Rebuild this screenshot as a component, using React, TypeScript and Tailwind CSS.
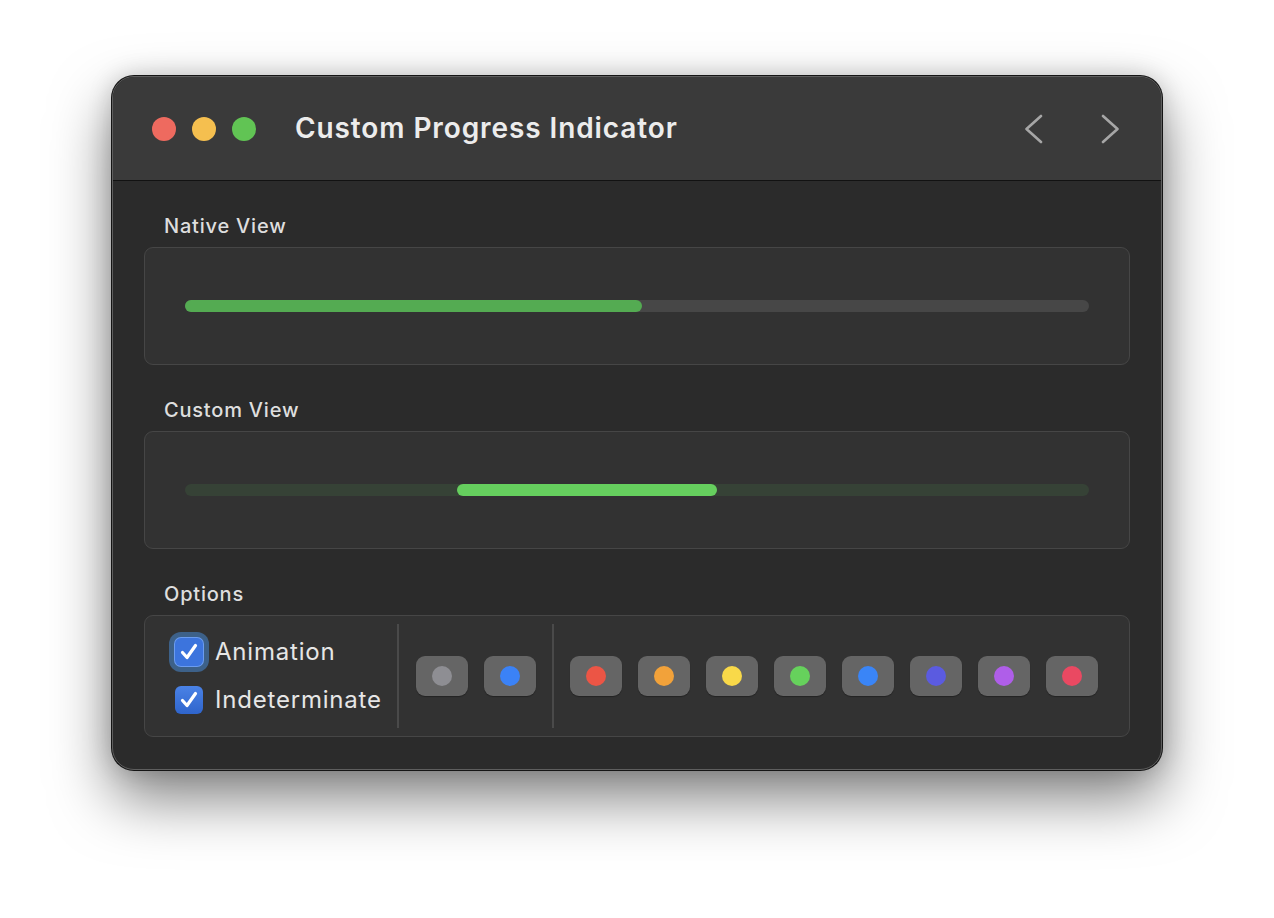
const font = { fontFamily: "Inter, 'Noto Sans', sans-serif" }

const accentDots = ["#8e8e93", "#3b82f6"]
const tintDots = ["#ec5545", "#f2a23a", "#f9d949", "#66d15c", "#3a85f7", "#5b5be0", "#af5ee9", "#ea4962"]

function Check({ focused }: { focused?: boolean }) {
	return (
		<div
			className={
				focused
					? "flex h-[28px] w-[28px] items-center justify-center rounded-[6px] bg-[#3c74dd] shadow-[0_0_0_1px_#6b9cf0,0_0_0_6px_#3d6189]"
					: "flex h-[28px] w-[28px] items-center justify-center rounded-[6px] bg-gradient-to-b from-[#4a82e6] to-[#2f65cc]"
			}
		>
			<svg width="20" height="20" viewBox="0 0 20 20" fill="none">
				<polyline
					points="3.5,10.5 8,15.5 16.5,3.5"
					stroke="white"
					strokeWidth="3.2"
					strokeLinecap="round"
					strokeLinejoin="round"
				/>
			</svg>
		</div>
	)
}

function DotButton({ color }: { color: string }) {
	return (
		<button className="flex h-[40px] w-[52px] items-center justify-center rounded-[9px] bg-[#656565] shadow-[0_1px_1px_rgba(0,0,0,0.3)]">
			<span className="h-[20px] w-[20px] rounded-full" style={{ backgroundColor: color }} />
		</button>
	)
}

function Section({ label, children }: { label: string; children: React.ReactNode }) {
	return (
		<div className="flex flex-col">
			<div className="pl-[20px] text-[20px] leading-[24px] font-medium tracking-[0.8px] text-[#dedede]">{label}</div>
			<div className="mt-[9px] rounded-[9px] border border-[#464646] bg-[#323232]">{children}</div>
		</div>
	)
}

export default function App() {
	return (
		<div className="min-h-screen bg-white pt-[76px] pl-[112px]" style={font}>
			<div className="h-[694px] w-[1050px] overflow-hidden rounded-[22px] border border-[#5e5e5e] bg-[#2b2b2b] shadow-[0_0_0_1px_#151515,0_28px_60px_rgba(0,0,0,0.5),0_0_24px_rgba(0,0,0,0.18)]">
				{/* Title bar */}
				<div className="flex h-[104px] items-center border-b border-[#121212] bg-[#3a3a3a] pl-[39px] pr-[42px]">
					<div className="flex gap-[16px]">
						<span className="h-[24px] w-[24px] rounded-full bg-[#ee6a5f]" />
						<span className="h-[24px] w-[24px] rounded-full bg-[#f5bf4f]" />
						<span className="h-[24px] w-[24px] rounded-full bg-[#61c454]" />
					</div>
					<h1 className="ml-[39px] pb-[2px] text-[28px] font-semibold tracking-[0.9px] text-[#ececec]">
						Custom Progress Indicator
					</h1>
					<div className="ml-auto flex items-center gap-[58px]">
						<svg width="18" height="30" viewBox="0 0 18 30" fill="none">
							<polyline points="16,2 1.5,15 16,28" stroke="#a6a6a6" strokeWidth="2.6" strokeLinecap="round" strokeLinejoin="round" />
						</svg>
						<svg width="18" height="30" viewBox="0 0 18 30" fill="none">
							<polyline points="2,2 16.5,15 2,28" stroke="#a6a6a6" strokeWidth="2.6" strokeLinecap="round" strokeLinejoin="round" />
						</svg>
					</div>
				</div>

				{/* Content */}
				<div className="flex flex-col gap-[33px] px-[31px] pt-[33px]">
					<Section label="Native View">
						<div className="flex h-[116px] items-center px-[40px]">
							<div className="h-[12px] w-full rounded-full bg-[#474747]">
								<div className="h-full w-[50.6%] rounded-full bg-[#54ab52]" />
							</div>
						</div>
					</Section>

					<Section label="Custom View">
						<div className="flex h-[116px] items-center px-[40px]">
							<div className="h-[12px] w-full rounded-full bg-[#364236]">
								<div className="ml-[272px] h-full w-[260px] rounded-full bg-[#66cf5e]" />
							</div>
						</div>
					</Section>

					<Section label="Options">
						<div className="flex h-[120px] items-stretch py-[8px] pl-[30px]">
							<div className="flex flex-col justify-center gap-[20px] text-[24px] leading-[28px] tracking-[0.8px] text-[#e6e6e6]">
								<label className="flex items-center gap-[12px]">
									<Check focused />
									Animation
								</label>
								<label className="flex items-center gap-[12px]">
									<Check />
									Indeterminate
								</label>
							</div>
							<div className="ml-[15px] mr-[17px] w-[2px] bg-[#4a4a4a]" />
							<div className="flex items-center gap-[16px]">
								{accentDots.map(c => (
									<DotButton key={c} color={c} />
								))}
							</div>
							<div className="mx-[16px] w-[2px] bg-[#4a4a4a]" />
							<div className="flex items-center gap-[16px]">
								{tintDots.map(c => (
									<DotButton key={c} color={c} />
								))}
							</div>
						</div>
					</Section>
				</div>
			</div>
		</div>
	)
}
